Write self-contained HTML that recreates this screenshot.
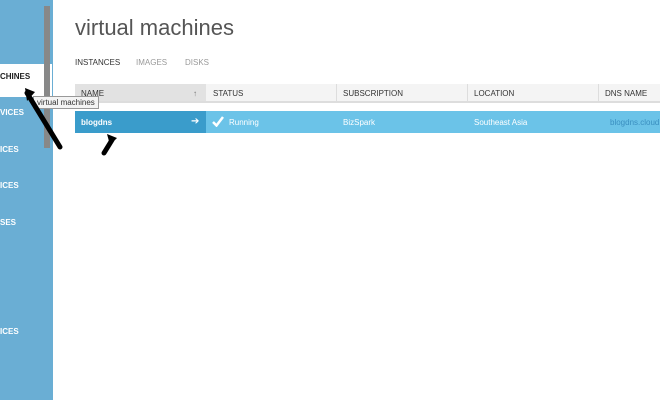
<!DOCTYPE html>
<html><head><style>
body{margin:0;width:660px;height:400px;overflow:hidden;background:#fff;font-family:"Liberation Sans",sans-serif;position:relative}
.a{position:absolute}
.side{left:0;top:0;width:53px;height:400px;background:#6aaed4}
.lbl{color:#fff;font-size:8px;font-weight:bold;left:0}
.th{font-size:8px;color:#333;top:89px}
.sep{top:84px;width:1px;height:17px;background:#fff}
.td{font-size:8px;color:#fff;top:118px}
</style></head><body>
<div class="a side"></div>
<div class="a" style="left:0;top:64px;width:52px;height:33px;background:#fff"></div>
<div class="a lbl" style="top:72px;color:#222">CHINES</div>
<div class="a lbl" style="top:108px">VICES</div>
<div class="a lbl" style="top:145px">ICES</div>
<div class="a lbl" style="top:181px">ICES</div>
<div class="a lbl" style="top:218px">SES</div>
<div class="a lbl" style="top:327px">ICES</div>
<div class="a" style="left:44px;top:6px;width:6px;height:142px;background:#888"></div>
<div class="a" style="left:75px;top:15px;font-size:22px;color:#555">virtual machines</div>
<div class="a" style="left:75px;top:58px;font-size:8px;color:#333">INSTANCES</div>
<div class="a" style="left:136px;top:58px;font-size:8px;color:#999">IMAGES</div>
<div class="a" style="left:185px;top:58px;font-size:8px;color:#999">DISKS</div>
<div class="a" style="left:75px;top:84px;width:585px;height:17px;background:#f4f4f4"></div>
<div class="a" style="left:75px;top:84px;width:131px;height:17px;background:#e2e2e2"></div>
<div class="a" style="left:75px;top:101px;width:585px;height:2px;background:#ddd"></div>
<div class="a sep" style="left:336px;background:#ddd"></div>
<div class="a sep" style="left:467px;background:#ddd"></div>
<div class="a sep" style="left:598px;background:#ddd"></div>
<div class="a th" style="left:81px">NAME</div>
<div class="a th" style="left:193px;color:#777;font-weight:bold">↑</div>
<div class="a th" style="left:213px">STATUS</div>
<div class="a th" style="left:343px">SUBSCRIPTION</div>
<div class="a th" style="left:474px">LOCATION</div>
<div class="a th" style="left:605px">DNS NAME</div>
<div class="a" style="left:75px;top:111px;width:585px;height:22px;background:#6bc3e8"></div>
<div class="a" style="left:75px;top:111px;width:131px;height:22px;background:#3a9ccb"></div>
<div class="a td" style="left:81px;font-weight:bold">blogdns</div>
<div class="a td" style="left:191px;font-size:10px;top:116px">➔</div>
<svg class="a" style="left:212px;top:116px" width="12" height="11"><path d="M1 6 L4.5 9.5 L11 1" stroke="#fff" stroke-width="2.5" fill="none"/></svg>
<div class="a td" style="left:229px">Running</div>
<div class="a td" style="left:343px">BizSpark</div>
<div class="a td" style="left:474px">Southeast Asia</div>
<div class="a td" style="left:610px;color:#3a8fc0">blogdns.cloud</div>
<div class="a" style="left:33px;top:96px;padding:1px 3px;background:#f4f4f4;border:1px solid #999;font-size:8px;color:#333">virtual machines</div>
<svg class="a" style="left:0;top:0" width="660" height="400">
<path d="M27 93 L60 147" stroke="#000" stroke-width="5" stroke-linecap="round"/>
<path d="M25 88 L35 92 L27 101 Z" fill="#000"/>
<path d="M104 153 L112 140" stroke="#000" stroke-width="5" stroke-linecap="round"/>
<path d="M107 134 L117 138 L110 145 Z" fill="#000"/>
</svg>
</body></html>
